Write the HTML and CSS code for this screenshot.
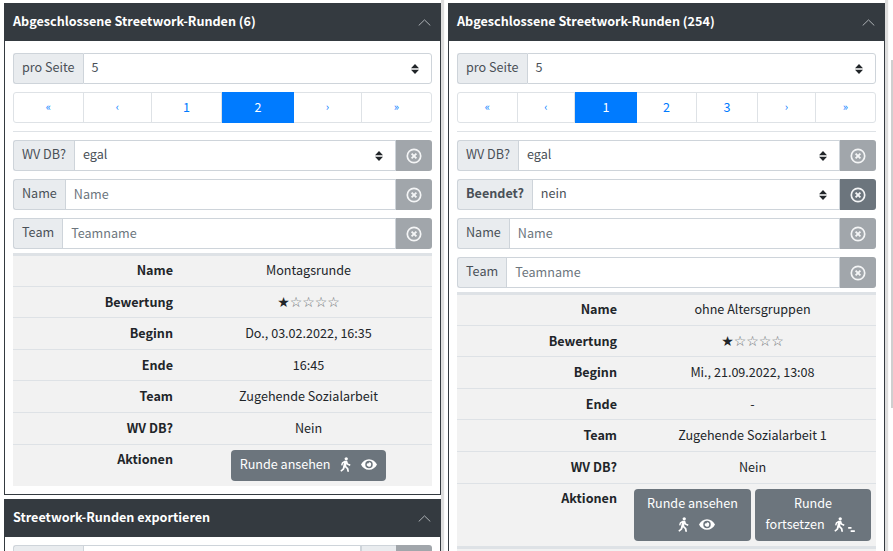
FILE: index.html
```html
<!DOCTYPE html>
<html>
<head>
<meta charset="utf-8">
<title>Streetwork-Runden</title>
<link rel="stylesheet" href="styles.css">
</head>
<body>
<svg class="defs" width="0" height="0">
  <symbol id="walk" viewBox="0 0 12 16">
    <circle cx="6.8" cy="1.800" r="1.800"/>
    <path d="M4.800 3.900h3l1 3 2.700 1.200-.7 1.500-3-1.300-.5-1.200-.6 2.400L9.200 12l.7 3.800-1.900.2-.6-3.200-2-1.800-.9 2.500-3 2.500-1.200-1.300 2.600-2.400L4.300 6.200l-1 .6-.7 2.400-1.500-.5.9-3z"/>
  </symbol>
  <symbol id="eye" viewBox="0 0 18 12">
    <path fill-rule="evenodd" d="M9 0c4 0 7.300 2.500 9 6-1.700 3.500-5 6-9 6s-7.300-2.500-9-6c1.700-3.500 5-6 9-6zm0 1.800a4.200 4.200 0 1 0 0 8.400 4.200 4.200 0 0 0 0-8.400zM9 3.600a2.400 2.400 0 1 1-1.900 1 1.300 1.300 0 0 0 1.900-1z"/>
  </symbol>
  <symbol id="steps" viewBox="0 0 8 6">
    <path d="M0 0h4v2H0zM3 4h5v2H3z"/>
  </symbol>
  <symbol id="clear" viewBox="0 0 16 16">
    <circle cx="8" cy="8" r="6.700" fill="none" stroke="currentColor" stroke-width="1.700"/>
    <path d="M5.600 5.600l4.800 4.800M10.400 5.600l-4.800 4.800" fill="none" stroke="currentColor" stroke-width="1.900"/>
  </symbol>
  <symbol id="updown" viewBox="0 0 8 10">
    <path d="M4 0l4 4.300H0zM0 5.700h8L4 10z"/>
  </symbol>
  <symbol id="chevron" viewBox="0 0 13 7">
    <path d="M.7 6.500l5.800-5.600 5.800 5.600" fill="none" stroke="currentColor" stroke-width="1"/>
  </symbol>
</svg>

<div class="columns">
  <div class="column">
    <div class="panel">
      <div class="panel-head">
        <span>Abgeschlossene Streetwork-Runden (6)</span>
        <svg class="chevron"><use href="#chevron"/></svg>
      </div>
      <div class="panel-body">
        <div class="input-row">
          <span class="prefix">pro Seite</span>
          <div class="select">5<svg class="updown"><use href="#updown"/></svg></div>
        </div>
        <div class="pages">
          <a class="page arrow w70">«</a>
          <a class="page arrow w68">‹</a>
          <a class="page w70">1</a>
          <a class="page on w72">2</a>
          <a class="page arrow w68">›</a>
          <a class="page arrow w69">»</a>
        </div>
        <hr>
        <div class="input-row">
          <span class="prefix">WV DB?</span>
          <div class="select">egal<svg class="updown"><use href="#updown"/></svg></div>
          <button class="clear"><svg><use href="#clear"/></svg></button>
        </div>
        <div class="input-row">
          <span class="prefix">Name</span>
          <div class="text-input">Name</div>
          <button class="clear"><svg><use href="#clear"/></svg></button>
        </div>
        <div class="input-row">
          <span class="prefix">Team</span>
          <div class="text-input">Teamname</div>
          <button class="clear"><svg><use href="#clear"/></svg></button>
        </div>
        <table class="details">
          <tr class="tall first"><th>Name</th><td>Montagsrunde</td></tr>
          <tr><th>Bewertung</th><td><span class="stars"><b>★</b>☆☆☆☆</span></td></tr>
          <tr class="tall"><th>Beginn</th><td>Do., 03.02.2022, 16:35</td></tr>
          <tr><th>Ende</th><td>16:45</td></tr>
          <tr class="tall"><th>Team</th><td>Zugehende Sozialarbeit</td></tr>
          <tr class="tall"><th>WV DB?</th><td>Nein</td></tr>
          <tr class="actions">
            <th>Aktionen</th>
            <td>
              <a class="btn">Runde ansehen <svg class="walk"><use href="#walk"/></svg><svg class="eye"><use href="#eye"/></svg></a>
            </td>
          </tr>
        </table>
      </div>
    </div>
    <div class="panel panel-export">
      <div class="panel-head">
        <span>Streetwork-Runden exportieren</span>
        <svg class="chevron"><use href="#chevron"/></svg>
      </div>
      <div class="panel-body export-body">
        <div class="input-row">
          <span class="prefix export-a">&nbsp;</span>
          <div class="select"></div>
          <span class="prefix export-b">&nbsp;</span>
          <button class="clear"></button>
        </div>
      </div>
    </div>
  </div>

  <div class="column">
    <div class="panel">
      <div class="panel-head">
        <span>Abgeschlossene Streetwork-Runden (254)</span>
        <svg class="chevron"><use href="#chevron"/></svg>
      </div>
      <div class="panel-body">
        <div class="input-row">
          <span class="prefix">pro Seite</span>
          <div class="select">5<svg class="updown"><use href="#updown"/></svg></div>
        </div>
        <div class="pages">
          <a class="page arrow w60">«</a>
          <a class="page arrow w57">‹</a>
          <a class="page on w62">1</a>
          <a class="page w60">2</a>
          <a class="page w61">3</a>
          <a class="page arrow w58">›</a>
          <a class="page arrow w59">»</a>
        </div>
        <hr>
        <div class="input-row">
          <span class="prefix">WV DB?</span>
          <div class="select">egal<svg class="updown"><use href="#updown"/></svg></div>
          <button class="clear"><svg><use href="#clear"/></svg></button>
        </div>
        <div class="input-row">
          <span class="prefix bold">Beendet?</span>
          <div class="select">nein<svg class="updown"><use href="#updown"/></svg></div>
          <button class="clear dark"><svg><use href="#clear"/></svg></button>
        </div>
        <div class="input-row">
          <span class="prefix">Name</span>
          <div class="text-input">Name</div>
          <button class="clear"><svg><use href="#clear"/></svg></button>
        </div>
        <div class="input-row">
          <span class="prefix">Team</span>
          <div class="text-input">Teamname</div>
          <button class="clear"><svg><use href="#clear"/></svg></button>
        </div>
        <table class="details">
          <tr class="tall first"><th>Name</th><td>ohne Altersgruppen</td></tr>
          <tr><th>Bewertung</th><td><span class="stars"><b>★</b>☆☆☆☆</span></td></tr>
          <tr class="tall"><th>Beginn</th><td>Mi., 21.09.2022, 13:08</td></tr>
          <tr><th>Ende</th><td>-</td></tr>
          <tr class="tall"><th>Team</th><td>Zugehende Sozialarbeit 1</td></tr>
          <tr class="tall"><th>WV DB?</th><td>Nein</td></tr>
          <tr class="actions">
            <th>Aktionen</th>
            <td>
              <div class="btn-row">
                <a class="btn wide-a">Runde ansehen <svg class="walk"><use href="#walk"/></svg><svg class="eye"><use href="#eye"/></svg></a>
                <a class="btn wide-b">Runde fortsetzen <svg class="walk"><use href="#walk"/></svg><svg class="steps"><use href="#steps"/></svg></a>
              </div>
            </td>
          </tr>
        </table>
        <div class="next-table"></div>
      </div>
    </div>
  </div>
</div>
<div class="scroll-thumb"></div>
</body>
</html>
```

FILE: styles.css
```css
html, body {
  height: 100%;
  overflow: hidden;
}

body {
  margin: 0;
  font-family: "Noto Sans CJK SC", "Noto Sans", sans-serif;
  font-size: 12.6px;
  color: #212529;
  background-color: #fff;
}

.defs {
  position: absolute;
}

.columns {
  display: flex;
  gap: 7px;
  padding-left: 4px;
  width: 881px;
  min-height: 700px;
}

.column {
  width: 437px;
  flex: none;
  padding-top: 3px;
  box-shadow: 3px 0 1px rgba(0, 0, 0, 0.13);
}

.panel {
  border: 1px solid #343a40;
  border-top: 0;
  background-color: #fff;
}

.panel-export {
  margin-top: 4px;
}

.panel-head {
  display: flex;
  justify-content: space-between;
  align-items: center;
  height: 38px;
  margin: 0 -1px;
  padding: 0 10px 4px 9px;
  box-sizing: border-box;
  background-color: #343a40;
  color: #fff;
  font-weight: bold;
}

.chevron {
  width: 13px;
  height: 7px;
  color: #adb1b5;
  margin-top: 5px;
}

.panel-body {
  padding: 12px 8px 8px;
}

.export-body {
  padding-top: 8px;
}

.input-row {
  display: flex;
  height: 31px;
  margin-bottom: 8px;
}

.prefix {
  display: flex;
  align-items: center;
  padding: 0 8px 5px;
  background-color: #e9ecef;
  border: 1px solid #ced4da;
  border-right: 0;
  border-radius: 3px 0 0 3px;
  color: #495057;
}

.bold {
  font-weight: bold;
}

.select, .text-input {
  flex: 1;
  display: flex;
  align-items: center;
  justify-content: space-between;
  padding: 0 12px 5px 8px;
  border: 1px solid #ced4da;
  color: #495057;
  background-color: #fff;
}

.input-row > :last-child {
  border-radius: 0 3px 3px 0;
}

.text-input {
  padding-bottom: 2px;
  color: #6c757d;
}

.updown {
  width: 8px;
  height: 10px;
  fill: #212529;
  margin-top: 5px;
}

.clear {
  display: flex;
  align-items: center;
  justify-content: center;
  width: 36px;
  padding: 0;
  border: 0;
  background-color: #a1a6ab;
  color: #f4f5f6;
}

.clear.dark {
  background-color: #6c757d;
}

.clear svg {
  width: 16px;
  height: 16px;
  fill: none;
}

.pages {
  display: flex;
  height: 31px;
  padding-bottom: 0;
  border: 1px solid #dee2e6;
  border-radius: 3px;
  box-sizing: border-box;
}

.page {
  display: flex;
  align-items: center;
  justify-content: center;
  box-sizing: border-box;
  padding-bottom: 3px;
  color: #007bff;
  border-right: 1px solid #dee2e6;
}

.page:last-child {
  border-right: 0;
}

.arrow {
  font-size: 11px;
}

.page.on {
  background-color: #007bff;
  color: #fff;
  margin: -1px 0;
  border-right: 0;
}

.w57 { width: 57px; }
.w58 { width: 58px; }
.w59 { width: 59px; }
.w60 { width: 60px; }
.w61 { width: 61px; }
.w62 { width: 62px; }
.w68 { width: 68px; }
.w69 { width: 69px; }
.w70 { width: 70px; }
.w72 { width: 72px; }

hr {
  height: 1px;
  margin: 8px 0 8px;
  border: 0;
  background-color: #dee2e6;
}

.details {
  width: 100%;
  margin-top: -4px;
  border-collapse: collapse;
  border-top: 3px solid #dee2e6;
  background-color: #f2f2f2;
}

.details th, .details td {
  height: 31px;
  padding: 0 0 2px;
  box-sizing: border-box;
  border-bottom: 1px solid #dee2e6;
  text-align: center;
  font-weight: normal;
}

.details .tall th, .details .tall td {
  height: 32px;
}

.details .first th, .details .first td {
  padding-bottom: 4px;
}

.details th {
  width: 160px;
  text-align: right;
  font-weight: bold;
}

.details td {
  padding-left: 12px;
}

.actions th, .actions td {
  border-bottom: 0;
  vertical-align: top;
}

.actions th {
  padding-top: 4px;
}

.actions td {
  padding-top: 5px;
  padding-bottom: 5px;
}

.stars {
  color: #666c71;
  font-family: "DejaVu Sans", sans-serif;
  font-size: 14px;
  letter-spacing: -0.100px;
}

.stars b {
  color: #212529;
  font-weight: normal;
}

.btn {
  display: inline-block;
  padding: 3px 9px 7px;
  background-color: #6c757d;
  border-radius: 4px;
  color: #fff;
  line-height: 21px;
  text-align: center;
}

.btn-row {
  display: flex;
  justify-content: center;
  gap: 4px;
}

.wide-a {
  width: 117px;
  box-sizing: border-box;
}

.wide-b {
  width: 116px;
  box-sizing: border-box;
}

.walk {
  width: 11px;
  height: 15px;
  fill: #fff;
  margin: 0 0 0 7px;
  vertical-align: -3px;
}

.eye {
  width: 16px;
  height: 11px;
  fill: #fff;
  margin-left: 10px;
  vertical-align: -1px;
}

.steps {
  width: 7px;
  height: 5px;
  fill: #fff;
  margin: 0 5px 0 3px;
  vertical-align: -3px;
}

.next-table {
  height: 40px;
  border-top: 3px solid #dee2e6;
  background-color: #f2f2f2;
}

.export-a {
  width: 70px;
  padding: 0;
  box-sizing: border-box;
}

.export-b {
  width: 35px;
  padding: 0;
  box-sizing: border-box;
  border-radius: 0;
}

.scroll-thumb {
  position: absolute;
  top: 60px;
  right: 0;
  width: 2px;
  height: 348px;
  background-color: #cfcfcf;
}
```
